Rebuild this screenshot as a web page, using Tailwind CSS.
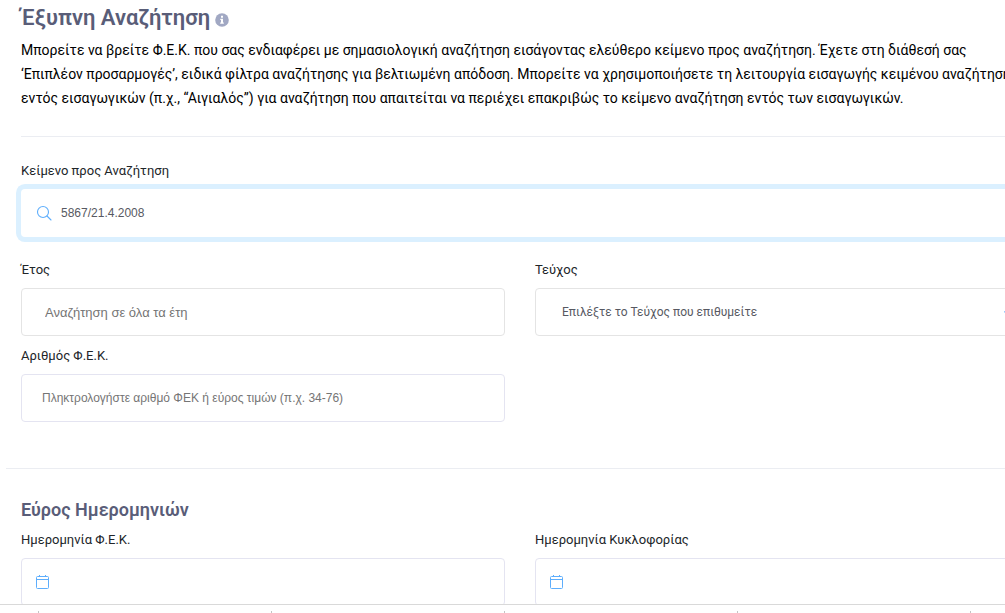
<!DOCTYPE html>
<html lang="el">
<head>
  <meta charset="UTF-8" />
  <meta name="viewport" content="width=device-width, initial-scale=1.0"/>
  <title>Έξυπνη Αναζήτηση</title>
  <script src="https://cdn.jsdelivr.net/npm/@tailwindcss/browser@4"></script>
</head>
<body class="h-screen flex flex-col overflow-hidden bg-white text-[#212529] font-['Roboto',sans-serif]">

  <main class="flex-1 min-h-0 overflow-hidden">
    <form class="-mr-[14px]">

      <!-- Intro -->
      <header class="ml-[21px] pt-1 pb-[26px] border-b border-[#ebedf2]">
        <h1 class="flex items-center gap-[5px] text-[22px] leading-7 font-semibold text-[#595d78]">
          Έξυπνη Αναζήτηση
          <button type="button" aria-label="Πληροφορίες" class="mt-1">
            <svg class="w-[14px] h-[14px]" viewBox="0 0 14 14">
              <circle cx="7" cy="7" r="6.8" fill="#a1a8c3"/>
              <path d="M6 2.8h2v1.9H6zM5.3 5.7H8v3.8h.8v1.2H5.2V9.500H6V6.900h-.7z" fill="#fff"/>
            </svg>
          </button>
        </h1>
        <p class="mt-[6px] text-[14px] leading-6 text-black">
          Μπορείτε να βρείτε Φ.Ε.Κ. που σας ενδιαφέρει με σημασιολογική αναζήτηση εισάγοντας ελεύθερο κείμενο προς αναζήτηση. Έχετε στη διάθεσή σας<br>
          <span class="whitespace-nowrap">‘Επιπλέον προσαρμογές’, ειδικά φίλτρα αναζήτησης για βελτιωμένη απόδοση. Μπορείτε να χρησιμοποιήσετε τη λειτουργία εισαγωγής κειμένου αναζήτηση</span><br>
          εντός εισαγωγικών (π.χ., “Αιγιαλός”) για αναζήτηση που απαιτείται να περιέχει επακριβώς το κείμενο αναζήτηση εντός των εισαγωγικών.
        </p>
      </header>

      <!-- Search fields -->
      <section class="ml-[21px] pt-6">
        <label for="query" class="block text-[13px] leading-5">Κείμενο προς Αναζήτηση</label>
        <div class="mt-2 h-12 flex items-center gap-[9px] pl-[15px] rounded bg-white ring-5 ring-[#dbf0ff]">
          <svg class="w-4 h-4" viewBox="0 0 16 16" fill="none" stroke="#5eaefc" stroke-width="1.1">
            <circle cx="7" cy="7" r="5.500"/>
            <path d="M11 11l4 4" stroke-linecap="round"/>
          </svg>
          <input id="query" type="text" value="5867/21.4.2008" class="flex-1 h-full outline-none text-[12px] text-[#575962] font-['Liberation_Sans',sans-serif]">
        </div>

        <div class="mt-[23px] grid grid-cols-2 gap-x-[30px] gap-y-[10px]">
          <div>
            <label for="year" class="block text-[13px] leading-5">Έτος</label>
            <input id="year" type="text" placeholder="Αναζήτηση σε όλα τα έτη" class="mt-2 w-full h-12 px-[23px] border border-[#e4e4e4] rounded outline-none text-[13px] placeholder:text-[#757575] font-['Liberation_Sans',sans-serif]">
          </div>
          <div>
            <label for="issue" class="block text-[13px] leading-5">Τεύχος</label>
            <div class="relative mt-2">
              <select id="issue" class="appearance-none w-full h-12 px-[26px] border border-[#e4e4e4] rounded outline-none bg-white text-[12px] text-[#575962]">
                <option>Επιλέξτε το Τεύχος που επιθυμείτε</option>
              </select>
              <svg class="absolute right-[7px] top-5 w-2 h-2 pointer-events-none" viewBox="0 0 8 8" fill="none" stroke="#5eaefc">
                <path d="M0 3.500l4 3 4-3"/>
              </svg>
            </div>
          </div>
          <div>
            <label for="number" class="block text-[13px] leading-5">Αριθμός Φ.Ε.Κ.</label>
            <input id="number" type="text" placeholder="Πληκτρολογήστε αριθμό ΦΕΚ ή εύρος τιμών (π.χ. 34-76)" class="mt-2 w-full h-12 px-5 border border-[#e4e4f1] rounded outline-none text-[12px] placeholder:text-[#757575] font-['Liberation_Sans',sans-serif]">
          </div>
        </div>
      </section>

      <hr class="mt-[46px] ml-[6px] border-[#ebedf2]">

      <!-- Date range -->
      <section class="ml-[21px] pt-[27px]">
        <h2 class="text-[18px] leading-7 font-semibold text-[#595d78]">Εύρος Ημερομηνιών</h2>
        <div class="mt-[6px] grid grid-cols-2 gap-x-[30px]">
          <div>
            <label for="date-fek" class="block text-[13px] leading-5">Ημερομηνία Φ.Ε.Κ.</label>
            <div class="mt-2 h-12 flex items-center gap-2 px-[14px] border border-[#e4e4f1] rounded">
              <svg class="w-[14px] h-[14px]" viewBox="0 0 14 14" fill="none" stroke="#5eaefc">
                <rect x=".5" y="1.500" width="12" height="12" rx="1"/>
                <path d="M.5 4.500h12M3.500 0v2M9.500 0v2"/>
              </svg>
              <input id="date-fek" type="text" class="flex-1 h-full outline-none text-[12px] text-[#575962]">
            </div>
          </div>
          <div>
            <label for="date-release" class="block text-[13px] leading-5">Ημερομηνία Κυκλοφορίας</label>
            <div class="mt-2 h-12 flex items-center gap-2 px-[14px] border border-[#e4e4f1] rounded">
              <svg class="w-[14px] h-[14px]" viewBox="0 0 14 14" fill="none" stroke="#5eaefc">
                <rect x=".5" y="1.500" width="12" height="12" rx="1"/>
                <path d="M.5 4.500h12M3.500 0v2M9.500 0v2"/>
              </svg>
              <input id="date-release" type="text" class="flex-1 h-full outline-none text-[12px] text-[#575962]">
            </div>
          </div>
        </div>
      </section>
    </form>
  </main>

  <!-- Bottom strip with column marks -->
  <footer class="shrink-0 h-[9px] flex items-end pl-[38px] border-t border-[#d9d9d9] bg-white overflow-hidden">
    <div class="shrink-0 w-[233px] h-[2px] border-l border-[#c4c4c4]"></div>
    <div class="shrink-0 w-[233px] h-[2px] border-l border-[#c4c4c4]"></div>
    <div class="shrink-0 w-[233px] h-[2px] border-l border-[#c4c4c4]"></div>
    <div class="shrink-0 w-[233px] h-[2px] border-l border-[#c4c4c4]"></div>
    <div class="shrink-0 w-[233px] h-[2px] border-l border-[#c4c4c4]"></div>
  </footer>

</body>
</html>
